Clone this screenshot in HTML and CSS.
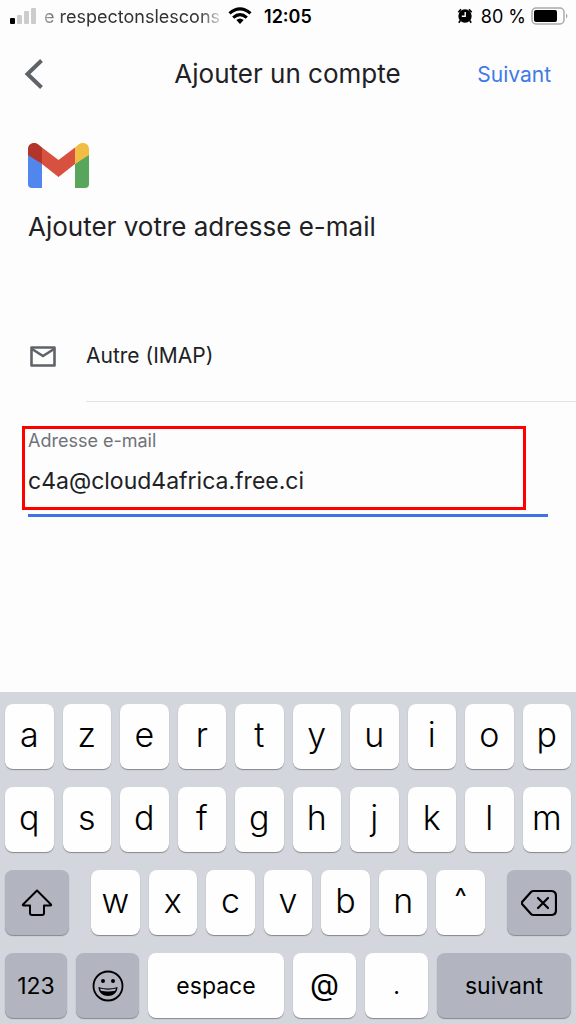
FILE: index.html
```html
<!doctype html>
<html lang="fr">
<head>
<meta charset="utf-8">
<meta name="viewport" content="width=device-width, initial-scale=1">
<title>Ajouter un compte</title>
<link rel="stylesheet" href="styles.css">
</head>
<body>
<div class="screen">
  <div class="status">
    <svg class="signal" width="26" height="18" viewBox="0 0 26 18"><rect x="0" y="11" width="5" height="6" rx="1"/><g fill="#ccc"><rect x="7" y="8" width="5" height="9" rx="1"/><rect x="14" y="4" width="5" height="13" rx="1"/><rect x="21" y="1" width="5" height="16" rx="1"/></g></svg>
    <span class="carrier">e respectonslescons</span>
    <svg class="wifi" width="24" height="18" viewBox="0 0 24 18"><g fill="none" stroke="#000" stroke-width="3.2"><path d="M1.5 6.4Q12 -2.6 22.5 6.4"/><path d="M5.2 10.6Q12 4.6 18.8 10.6"/></g><path d="M8.3 13.1Q12 10 15.7 13.1L12 17Z"/></svg>
    <span class="time">12:05</span>
    <svg class="alarm" width="16" height="18" viewBox="0 0 16 18"><circle cx="8" cy="9" r="6.7"/><path d="M1.300 5.200L4 2.200M12 2.200l2.700 3M3.300 13.500l-1.500 2.300M12.700 13.500l1.500 2.300" stroke="#000" stroke-width="1.600"/><path d="M8.200 5v4.300H4.800" fill="none" stroke="#fff" stroke-width="1.400"/></svg>
    <span class="percent">80 %</span>
    <svg class="battery" width="37" height="18" viewBox="0 0 37 18"><rect x="1" y="1" width="32" height="16" rx="4" fill="none" stroke="#aaa" stroke-width="1.5"/><rect x="3" y="3" width="23" height="12" rx="2"/><path d="M35 6.5q3 2.5 0 5z" fill="#aaa"/></svg>
  </div>

  <header class="topbar">
    <button class="back" aria-label="Retour"><svg width="20" height="32" viewBox="0 0 20 32"><path d="M17.5 2.5L3.5 16l14 13.5" fill="none" stroke="#5f6368" stroke-width="4"/></svg></button>
    <h1>Ajouter un compte</h1>
    <a class="next" href="#">Suivant</a>
  </header>

  <main>
    <svg class="logo" width="61" height="45" viewBox="0 0 61 45">
      <path d="M0 10l14 11v24H4a4 4 0 0 1-4-4z" fill="#5186ec"/>
      <path d="M61 10L47 21v24h10a4 4 0 0 0 4-4z" fill="#58a55c"/>
      <path d="M14 4.5L30.500 17 47 4.500V21L30.500 34 14 21z" fill="#d85040"/>
      <path d="M0 12V6C0 0 7-2 11 2l3 2.500V21L0 12z" fill="#b3342b"/>
      <path d="M61 12V6c0-6-7-8-11-4l-3 2.500V21l14-9z" fill="#f1bd42"/>
    </svg>
    <h2>Ajouter votre adresse e-mail</h2>

    <div class="provider">
      <svg width="26" height="21" viewBox="0 0 26 21"><path d="M1.500 1.500h23v18h-23z" fill="none" stroke="#5f6368" stroke-width="2.600" stroke-linejoin="round"/><path d="M2 3l11 7 11-7" fill="none" stroke="#5f6368" stroke-width="2.600"/></svg>
      <span>Autre (IMAP)</span>
    </div>

    <div class="field">
      <div class="highlight">
        <label for="email">Adresse e-mail</label>
        <input id="email" type="text" value="c4a@cloud4africa.free.ci">
      </div>
    </div>
  </main>

  <div class="keyboard">
    <div class="row letters">
      <button>a</button><button>z</button><button>e</button><button>r</button><button>t</button><button>y</button><button>u</button><button>i</button><button>o</button><button>p</button>
    </div>
    <div class="row letters">
      <button>q</button><button>s</button><button>d</button><button>f</button><button>g</button><button>h</button><button>j</button><button>k</button><button>l</button><button>m</button>
    </div>
    <div class="row third">
      <button class="dark" aria-label="Majuscule"><svg width="32" height="28" viewBox="0 0 32 28"><path d="M16 1.500L30 15.500q.6 1-.6 1H23V24q0 2-2 2H11q-2 0-2-2v-7.500H2.600q-1.200 0-.6-1z" fill="none" stroke="#000" stroke-width="2" stroke-linejoin="round"/></svg></button>
      <div class="letters middle">
        <button>w</button><button>x</button><button>c</button><button>v</button><button>b</button><button>n</button><button class="accent">^</button>
      </div>
      <button class="dark" aria-label="Effacer"><svg width="36" height="28" viewBox="0 0 36 28"><g fill="none" stroke="#000" stroke-width="2.200" stroke-linecap="round" stroke-linejoin="round"><path d="M12.500 2H30q5 0 5 5v14q0 5-5 5H12.500q-1.500 0-2.500-1L1.500 15.500q-1.300-1.500 0-3L10 3q1-1 2.500-1z"/><path d="M17 9l10 10M27 9L17 19"/></g></svg></button>
    </div>
    <div class="row fourth">
      <button class="dark word">123</button>
      <button class="dark" aria-label="Emoji"><svg width="32" height="32" viewBox="0 0 32 32"><circle cx="16" cy="16" r="14.500" fill="none" stroke="#000" stroke-width="1.800"/><circle cx="11" cy="11" r="2"/><circle cx="21" cy="11" r="2"/><path d="M6.500 17q9.500 3 19 0c0 12-19 12-19 0z"/><path d="M8 18.600q8 2.200 16 0l-.9 2.200q-7.100 1.600-14.200 0z" fill="#b2b5bf"/></svg></button>
      <button class="word">espace</button>
      <button class="at">@</button>
      <button class="word">.</button>
      <button class="dark word">suivant</button>
    </div>
  </div>
</div>
</body>
</html>
```
FILE: styles.css
```css
*{box-sizing:border-box;}
body{margin:0;background:#fdfdfd;color:#202124;font-family:Inter,"Liberation Sans",sans-serif;}
button{font-family:inherit;border:0;padding:0;cursor:pointer;}
svg{display:block;flex:none;}

.screen{
  display:flex;
  flex-direction:column;
  min-height:100vh;
}

/* Status bar */
.status{
  display:flex;
  align-items:center;
  height:32px;
  padding:0 8px 0 10px;
  font-size:18px;
  color:#000;
}
.carrier{
  margin:0 8px;
  white-space:nowrap;
  color:#333;
  -webkit-mask-image:linear-gradient(90deg,rgba(0,0,0,.4),#000 20px,#000 155px,rgba(0,0,0,.2));
  mask-image:linear-gradient(90deg,rgba(0,0,0,.4),#000 20px,#000 155px,rgba(0,0,0,.2));
}
.time{margin-left:12px;font-weight:600;}
.alarm{margin-left:auto;}
.percent{margin:0 5px 0 8px;}

/* Header */
.topbar{
  display:grid;
  grid-template-columns:1fr auto 1fr;
  align-items:center;
  height:84px;
  padding:0 25px 0 24px;
}
.back{justify-self:start;background:none;}
h1,h2{
  margin:0;
  font-size:26px;
  line-height:32px;
  font-weight:400;
}
.next{
  justify-self:end;
  font-size:21px;
  color:#4079e8;
  text-decoration:none;
}

main{flex:1;padding:27px 28px 0;}
h2{margin-top:23px;}

.provider{
  display:flex;
  align-items:center;
  gap:30px;
  margin:68px -28px 0 0;
  padding-left:2px;
}
.provider span{
  flex:1;
  padding:32px 0;
  border-bottom:1px solid #e2e2e2;
  font-size:21px;
  line-height:26px;
}

/* Email field */
.field{margin-top:24px;border-bottom:3px solid #3c74e3;}
.highlight{
  margin:0 22px 4px -6px;
  padding:2px 3px 10px;
  border:3px solid #f00;
}
.highlight label{
  display:block;
  font-size:18px;
  line-height:20px;
  color:#6f7378;
}
.highlight input{
  display:block;
  width:100%;
  height:32px;
  margin-top:14px;
  padding:0;
  border:0;
  outline:none;
  background:none;
  font-family:inherit;
  font-size:23px;
  color:#202124;
}

/* Keyboard */
.keyboard{
  display:flex;
  flex-direction:column;
  gap:18px;
  padding:12px 5px 6px;
  background:#d3d6dc;
}
.row,.middle{display:grid;gap:9px;}
.letters{grid-auto-flow:column;grid-auto-columns:minmax(0,1fr);}
.third{grid-template-columns:64fr 394fr 64fr;gap:22px;}
.fourth{grid-template-columns:62fr 63fr 136fr 63fr 63fr 134fr;}
.keyboard button{
  display:flex;
  align-items:center;
  justify-content:center;
  height:65px;
  padding-bottom:4px;
  border-radius:8px;
  background:#fefefe;
  box-shadow:0 1px 1px #85878c;
  color:#000;
  font-size:34px;
  font-weight:300;
}
.keyboard .dark{background:#b2b5bf;padding-bottom:0;}
.keyboard .word{font-size:23px;font-weight:400;padding-bottom:0;}
.keyboard .at{font-size:30px;font-weight:400;}
.keyboard .accent{font-size:26px;font-weight:400;padding-bottom:12px;}
```
